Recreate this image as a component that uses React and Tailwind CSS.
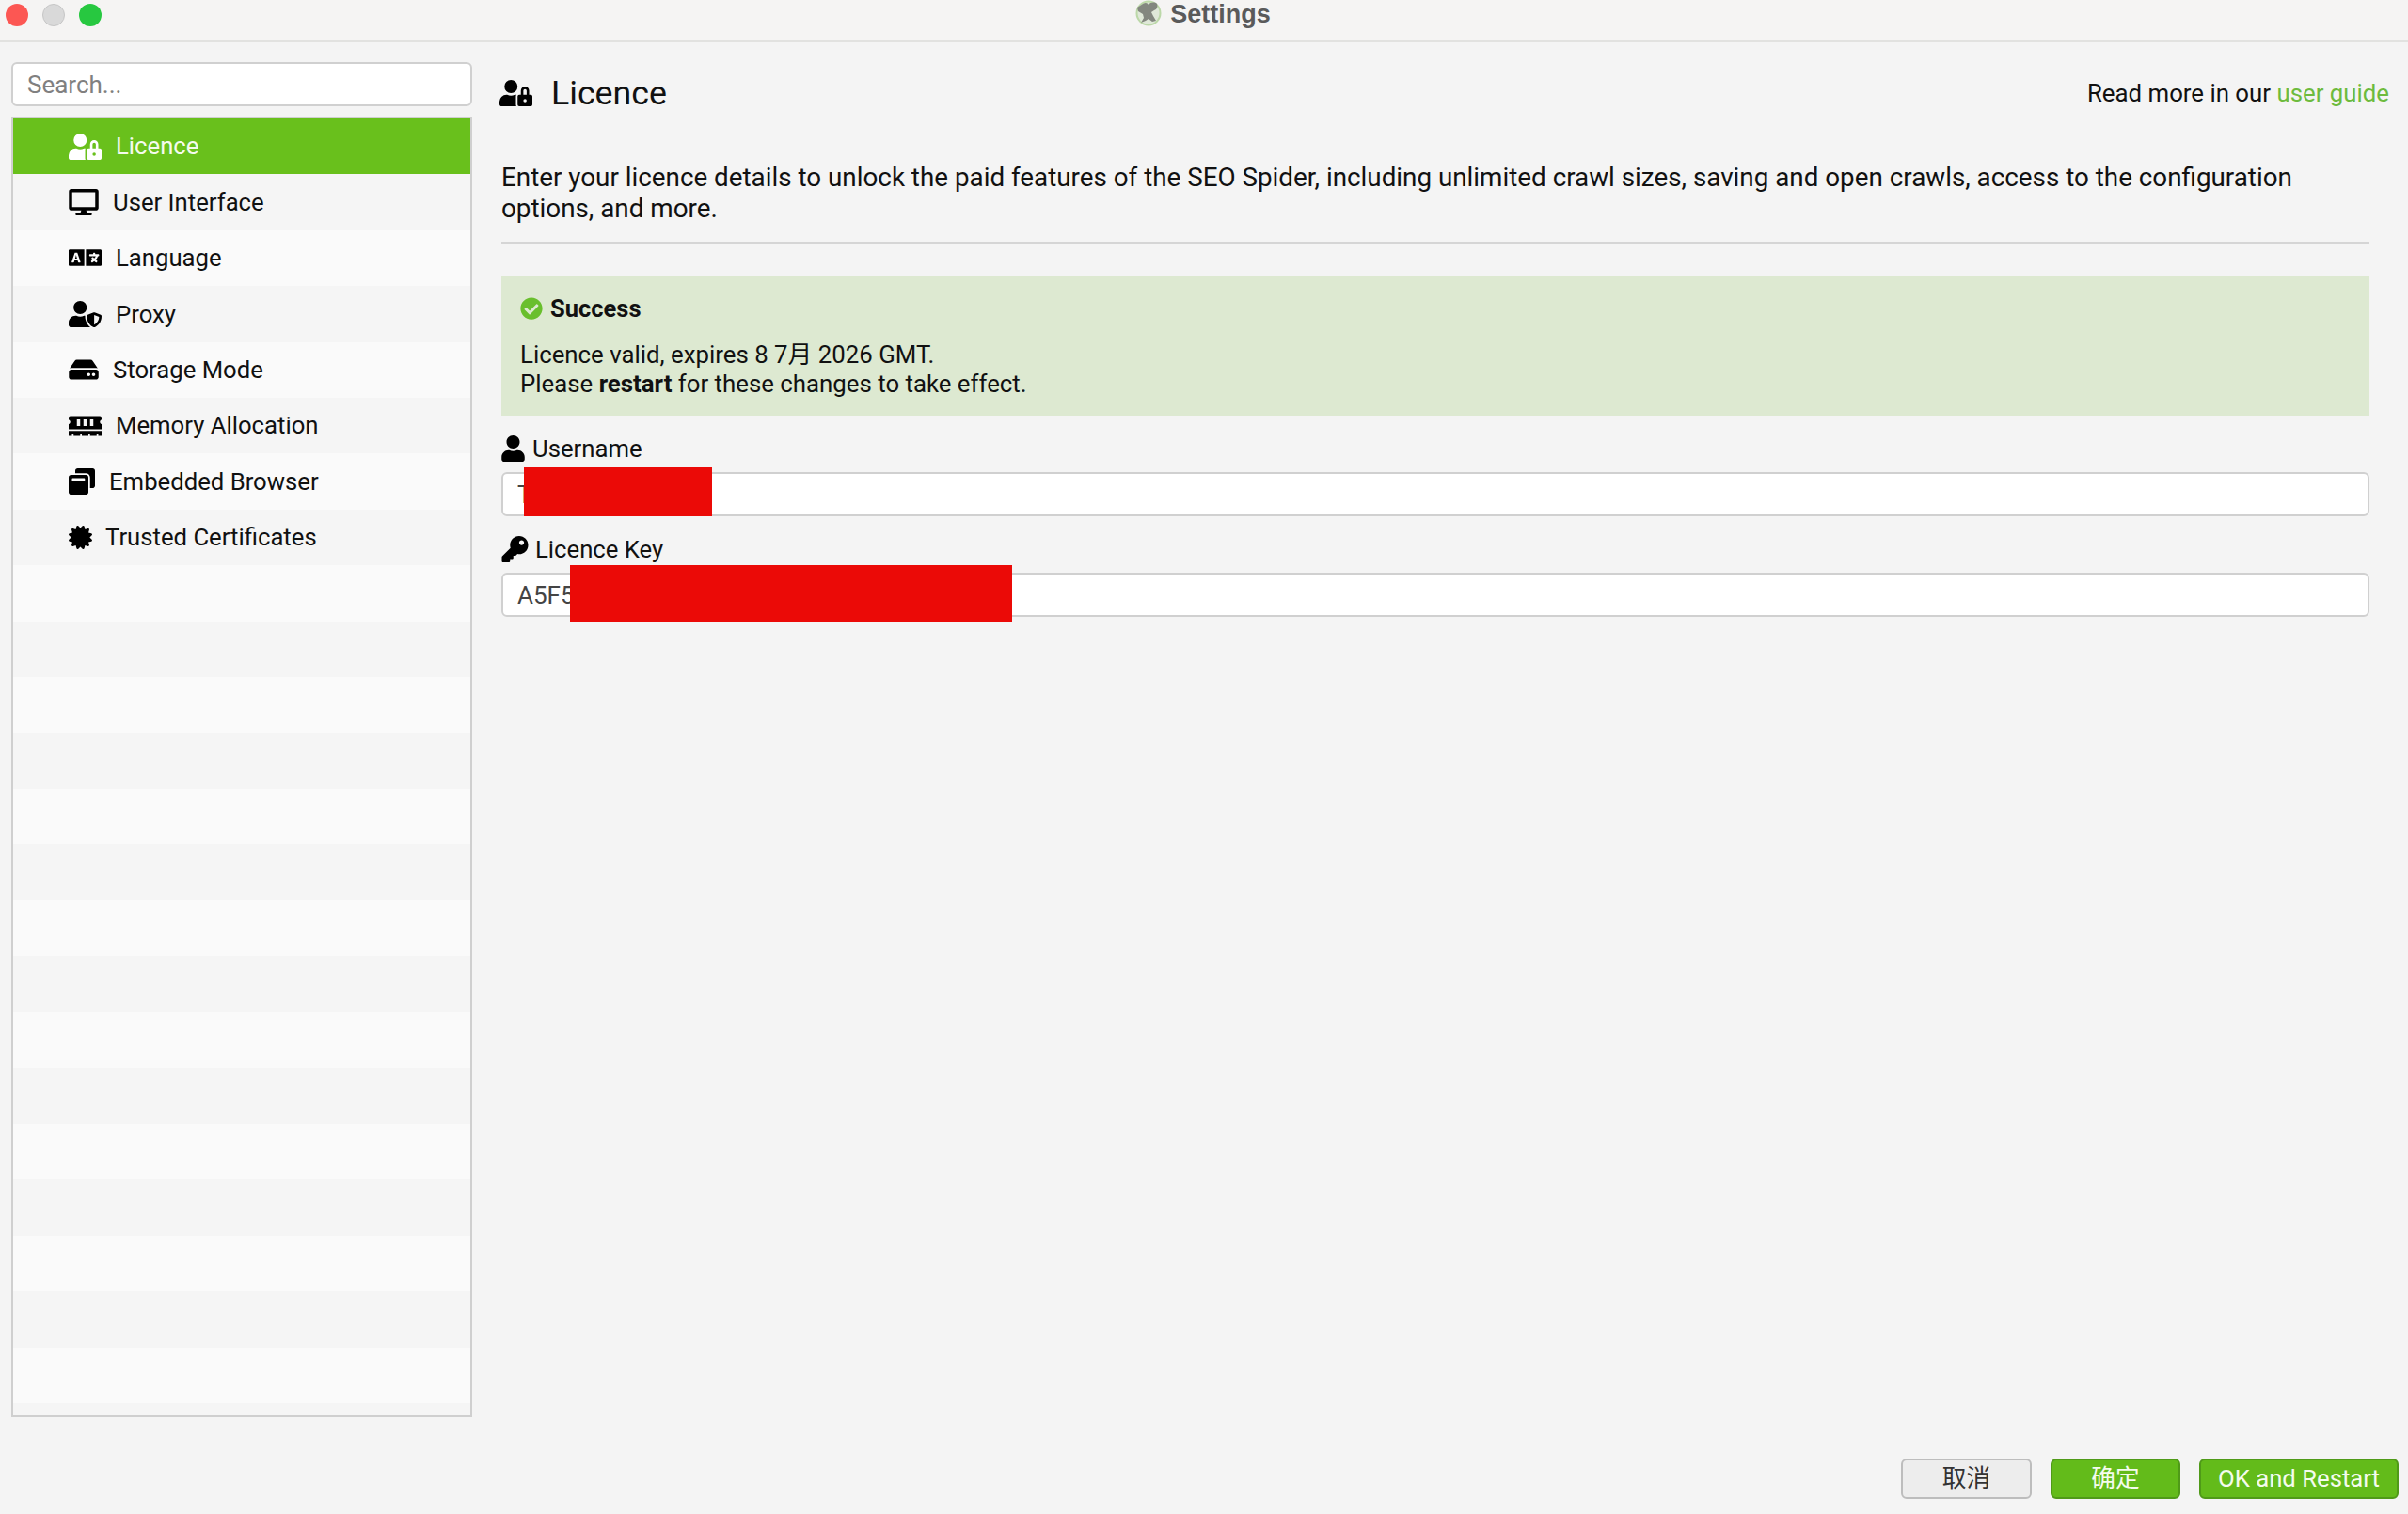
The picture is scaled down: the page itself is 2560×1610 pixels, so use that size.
import React from 'react';
import {
  FaUserLock,
  FaDesktop,
  FaLanguage,
  FaUserShield,
  FaHdd,
  FaMemory,
  FaWindowRestore,
  FaCertificate,
  FaCheckCircle,
  FaUser,
  FaKey,
} from 'react-icons/fa';

const navItems = [
  { label: 'Licence', icon: FaUserLock, size: 'w-[35px] h-[28px] mr-[15px]' },
  { label: 'User Interface', icon: FaDesktop, size: 'w-[32px] h-[28px] mr-[15px]' },
  { label: 'Language', icon: FaLanguage, size: 'w-[35px] h-[28px] mr-[15px]' },
  { label: 'Proxy', icon: FaUserShield, size: 'w-[35px] h-[28px] mr-[15px]' },
  { label: 'Storage Mode', icon: FaHdd, size: 'w-[32px] h-[28px] mr-[15px]' },
  { label: 'Memory Allocation', icon: FaMemory, size: 'w-[35px] h-[28px] mr-[15px]' },
  { label: 'Embedded Browser', icon: FaWindowRestore, size: 'w-[28px] h-[28px] mr-[15px]' },
  { label: 'Trusted Certificates', icon: FaCertificate, size: 'w-[25px] h-[25px] mr-[14px]' },
];

const emptyRows = Array.from({ length: 16 }, (_, i) => i + navItems.length);

const FrogLogo = () => (
  <svg width="28" height="28" viewBox="0 0 28 28" className="shrink-0">
    <circle cx="14" cy="14" r="12.5" fill="#dfe8d8" stroke="#bcd8a8" strokeWidth="2" />
    <path
      d="M8 4c3-2 5-1 6 1 2-3 7-3 9-1 1 3 0 6-3 7l-3 2 2 4 3 5-4 1-4-3-3 2-5 2 3-5-1-4-5-3-1-4z"
      fill="#83877f"
    />
  </svg>
);

const App = () => {
  return (
    <div className="w-[2560px] h-[1610px] flex flex-col bg-[#f4f4f4] text-[#111] overflow-hidden font-['Roboto','Noto_Sans_CJK_SC',sans-serif]">
      {/* Title bar */}
      <div className="h-[45px] shrink-0 grid grid-cols-3 border-b-2 border-[#e2e2e0] bg-[#f5f4f3]">
        <div className="flex gap-[15px] pl-[6px] pt-[4px]">
          <span className="w-[24px] h-[24px] rounded-full bg-[#fc5753]" />
          <span className="w-[24px] h-[24px] rounded-full bg-[#d9d9d9] border border-[#c6c6c6]" />
          <span className="w-[24px] h-[24px] rounded-full bg-[#27c840]" />
        </div>
        <div className="flex justify-center items-start gap-[9px] pr-[2px]">
          <FrogLogo />
          <span className="text-[27px] leading-[30px] font-bold text-[#5a5a5a] font-['Liberation_Sans',sans-serif]">Settings</span>
        </div>
        <div />
      </div>

      <div className="flex-1 flex min-h-0">
        {/* Sidebar */}
        <div className="w-[490px] ml-[12px] shrink-0 pt-[21px]">
          <input
            readOnly
            placeholder="Search..."
            className="w-full h-[47px] px-[15px] bg-white border-2 border-[#d0d0d0] rounded-[6px] text-[26px] text-[#333] placeholder:text-[#808080] outline-none"
          />
          <div className="mt-[11px] w-full h-[1383px] border-2 border-[#cfcfcf] overflow-hidden bg-[#fafafa]">
            {navItems.map((item, i) => {
              const Icon = item.icon;
              return (
                <div
                  key={item.label}
                  className={`h-[59.4px] flex items-center pl-[59px] text-[25.7px] ${
                    i === 0 ? 'bg-[#69c01c] text-[#f4fbee]' : i % 2 === 1 ? 'bg-[#f5f5f5]' : 'bg-[#fafafa]'
                  }`}
                >
                  <Icon className={`shrink-0 ${item.size} ${i === 0 ? 'text-white' : 'text-black'}`} />
                  <span>{item.label}</span>
                </div>
              );
            })}
            {emptyRows.map(i => (
              <div key={i} className={`h-[59.4px] ${i % 2 === 1 ? 'bg-[#f5f5f5]' : 'bg-[#fafafa]'}`} />
            ))}
          </div>
        </div>

        {/* Licence panel */}
        <div className="w-[1986px] ml-[31px] shrink-0 pt-[21px]">
          <div className="h-[64px] flex items-center pt-[2px] -mr-[21px] -ml-[2px]">
            <FaUserLock className="w-[35px] h-[28px] text-black mr-[20px]" />
            <span className="text-[35.7px] leading-[44px]">Licence</span>
            <span className="ml-auto text-[25.8px]">
              Read more in our <span className="text-[#6dbb3d]">user guide</span>
            </span>
          </div>

          <p className="mt-[42px] text-[27.8px] leading-[33px] pb-[19px] border-b-2 border-[#d5d5d5]">
            Enter your licence details to unlock the paid features of the SEO Spider, including unlimited crawl sizes, saving and open crawls, access to the configuration options, and more.
          </p>

          <div className="mt-[34px] h-[149px] bg-[#dde9d1] pl-[20px] pt-[20px]">
            <div className="h-[30px] flex items-center gap-[8px] text-[25.5px] font-bold">
              <FaCheckCircle className="w-[24px] h-[24px] text-[#69bf2d]" />
              <span>Success</span>
            </div>
            <div className="mt-[19px] text-[25.8px] leading-[31px]">
              <div>Licence valid, expires 8 7月 2026 GMT.</div>
              <div>
                Please <b>restart</b> for these changes to take effect.
              </div>
            </div>
          </div>

          <label className="mt-[20px] h-[30px] flex items-center gap-[8px] text-[25.7px]">
            <FaUser className="w-[25px] h-[28px] text-black" />
            <span>Username</span>
          </label>
          <div className="relative mt-[10px]">
            <input
              readOnly
              value="T"
              className="w-full h-[47px] px-[15px] bg-white border-2 border-[#d0d0d0] rounded-[6px] text-[26px] text-[#444] outline-none"
            />
            <div className="absolute left-[24px] top-[-5px] w-[200px] h-[52px] bg-[#eb0a07]" />
          </div>

          <label className="mt-[20px] h-[30px] flex items-center gap-[7px] text-[25.7px]">
            <FaKey className="w-[29px] h-[28px] text-black" />
            <span>Licence Key</span>
          </label>
          <div className="relative mt-[10px]">
            <input
              readOnly
              value="A5F5"
              className="w-full h-[47px] px-[15px] bg-white border-2 border-[#d0d0d0] rounded-[6px] text-[26px] text-[#444] outline-none"
            />
            <div className="absolute left-[73px] top-[-8px] w-[470px] h-[60px] bg-[#eb0a07]" />
          </div>
        </div>
      </div>

      {/* Dialog buttons */}
      <div className="shrink-0 flex justify-end gap-[20px] pr-[10px] pb-[16px] text-[25.7px]">
        <button className="w-[139px] h-[43px] rounded-[6px] border-2 border-[#bdbdbd] bg-[#ededed] text-[#333]">取消</button>
        <button className="w-[138px] h-[43px] rounded-[6px] border-2 border-[#4f9a18] bg-[#63bb1a] text-[#f4fbee]">确定</button>
        <button className="w-[212px] h-[43px] rounded-[6px] border-2 border-[#4f9a18] bg-[#63bb1a] text-[#f4fbee]">OK and Restart</button>
      </div>
    </div>
  );
};

export default App;
